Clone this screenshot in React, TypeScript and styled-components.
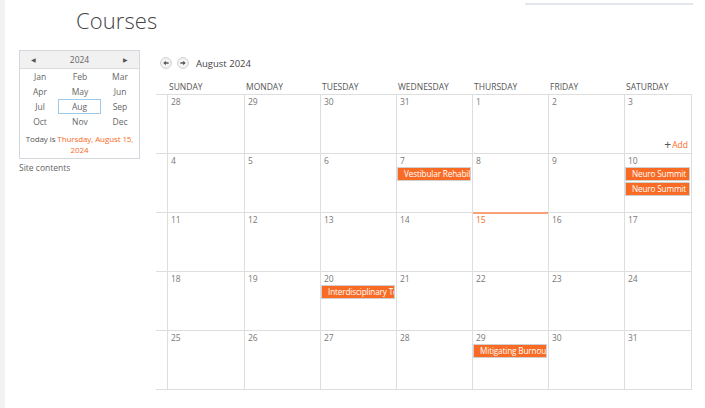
import React from "react";
import styled, { createGlobalStyle } from "styled-components";

const ORANGE = "#f96b24";

const GlobalStyle = createGlobalStyle`
  html, body {
    margin: 0;
    padding: 0;
    background: #ffffff;
  }
  body {
    font-family: "Open Sans", "Noto Sans", sans-serif;
    color: #444444;
  }
`;

interface CalEvent {
  title: string;
}

interface DayInfo {
  day: number;
  events?: CalEvent[];
  today?: boolean;
  add?: boolean;
}

const weekDays = ["SUNDAY", "MONDAY", "TUESDAY", "WEDNESDAY", "THURSDAY", "FRIDAY", "SATURDAY"];

const weeks: DayInfo[][] = [
  [{ day: 28 }, { day: 29 }, { day: 30 }, { day: 31 }, { day: 1 }, { day: 2 }, { day: 3, add: true }],
  [
    { day: 4 },
    { day: 5 },
    { day: 6 },
    { day: 7, events: [{ title: "Vestibular Rehabilitation" }] },
    { day: 8 },
    { day: 9 },
    { day: 10, events: [{ title: "Neuro Summit" }, { title: "Neuro Summit" }] },
  ],
  [{ day: 11 }, { day: 12 }, { day: 13 }, { day: 14 }, { day: 15, today: true }, { day: 16 }, { day: 17 }],
  [
    { day: 18 },
    { day: 19 },
    { day: 20, events: [{ title: "Interdisciplinary Team" }] },
    { day: 21 },
    { day: 22 },
    { day: 23 },
    { day: 24 },
  ],
  [
    { day: 25 },
    { day: 26 },
    { day: 27 },
    { day: 28 },
    { day: 29, events: [{ title: "Mitigating Burnout" }] },
    { day: 30 },
    { day: 31 },
  ],
];

const months = ["Jan", "Feb", "Mar", "Apr", "May", "Jun", "Jul", "Aug", "Sep", "Oct", "Nov", "Dec"];

const NavCircle: React.FC<{ dir: "left" | "right" }> = ({ dir }) => (
  <svg width="12" height="12" viewBox="0 0 12 12">
    <circle cx="6" cy="6" r="5.4" fill="#f4f4f4" stroke="#c8c8c8" strokeWidth="0.9" />
    {dir === "left" ? (
      <path d="M3.3 6 L5.8 3.7 L5.8 5.2 L8.6 5.2 L8.6 6.8 L5.8 6.8 L5.8 8.3 Z" fill="#555" />
    ) : (
      <path d="M8.7 6 L6.2 3.7 L6.2 5.2 L3.4 5.2 L3.4 6.8 L6.2 6.8 L6.2 8.3 Z" fill="#555" />
    )}
  </svg>
);

export default function App() {
  return (
    <>
      <GlobalStyle />
      <Page>
        <Rail />
        <Main>
          <TopBar>
            <SearchBox />
          </TopBar>
          <Title>Courses</Title>
          <Body>
            <Sidebar>
              <Picker>
                <PickerHead>
                  <PickerArrow>&#9664;</PickerArrow>
                  <span>2024</span>
                  <PickerArrow>&#9654;</PickerArrow>
                </PickerHead>
                <MonthGrid>
                  {months.map((m) => (
                    <Month key={m} selected={m === "Aug"}>
                      {m}
                    </Month>
                  ))}
                </MonthGrid>
                <TodayNote>
                  Today is <TodayDate>Thursday, August 15, 2024</TodayDate>
                </TodayNote>
              </Picker>
              <SiteLink>Site contents</SiteLink>
            </Sidebar>
            <Calendar>
              <NavRow>
                <NavCircle dir="left" />
                <NavCircle dir="right" />
                <MonthTitle>August 2024</MonthTitle>
              </NavRow>
              <HeaderRow>
                <span />
                {weekDays.map((d) => (
                  <DayName key={d}>{d}</DayName>
                ))}
              </HeaderRow>
              {weeks.map((week, wi) => (
                <WeekRow key={wi}>
                  <span />
                  {week.map((d, di) => (
                    <DayCell key={di} today={d.today} last={di === 6}>
                      <DayNum today={d.today}>{d.day}</DayNum>
                      {d.events?.map((e, ei) => (
                        <EventBar key={ei}>{e.title}</EventBar>
                      ))}
                      {d.add && (
                        <AddLink>
                          <Plus>+</Plus>Add
                        </AddLink>
                      )}
                    </DayCell>
                  ))}
                </WeekRow>
              ))}
            </Calendar>
          </Body>
        </Main>
      </Page>
    </>
  );
}

const Page = styled.div`
  display: flex;
  width: 705px;
  height: 408px;
  overflow: hidden;
`;

const Rail = styled.div`
  width: 5px;
  flex-shrink: 0;
  background: #f2f2f2;
`;

const Main = styled.div`
  flex: 1;
  display: flex;
  flex-direction: column;
  padding-left: 14px;
`;

const TopBar = styled.div`
  display: flex;
  justify-content: flex-end;
  padding-top: 3px;
  padding-right: 12px;
  height: 2px;
`;

const SearchBox = styled.div`
  width: 168px;
  height: 0;
  border-bottom: 2px solid #e3e6ea;
`;

const Title = styled.h1`
  margin: 0 0 0 57px;
  font-size: 22px;
  font-weight: 300;
  line-height: 30px;
  height: 45px;
  color: #444;
  letter-spacing: 0.1px;
`;

const Body = styled.div`
  display: flex;
  gap: 16px;
`;

const Sidebar = styled.div`
  width: 121px;
  display: flex;
  flex-direction: column;
`;

const Picker = styled.div`
  border: 1px solid #d4d8dc;
  display: flex;
  flex-direction: column;
  padding-bottom: 3px;
`;

const PickerHead = styled.div`
  display: flex;
  justify-content: space-between;
  align-items: center;
  height: 17px;
  padding: 0 11px 0 11px;
  background: #f1f1f1;
  border-bottom: 1px solid #dcdcdc;
  font-size: 8.5px;
  color: #666;
`;

const PickerArrow = styled.span`
  font-size: 6px;
  color: #555;
`;

const MonthGrid = styled.div`
  display: grid;
  grid-template-columns: repeat(3, 40px);
  grid-auto-rows: 15px;
`;

const Month = styled.div<{ selected?: boolean }>`
  display: flex;
  align-items: center;
  justify-content: center;
  font-size: 8.5px;
  color: #666;
  box-sizing: border-box;
  border: 1px solid ${({ selected }) => (selected ? "#9fcbeb" : "transparent")};
  margin: ${({ selected }) => (selected ? "0 -1px 0 -2px" : "0")};
`;

const TodayNote = styled.div`
  margin-top: 4px;
  padding: 0 1px;
  text-align: center;
  font-size: 8px;
  letter-spacing: -0.1px;
  line-height: 11px;
  color: #555;
`;

const TodayDate = styled.span`
  color: ${ORANGE};
`;

const SiteLink = styled.div`
  margin-top: 3px;
  font-size: 8.5px;
  color: #666;
`;

const Calendar = styled.div`
  width: 536px;
  display: flex;
  flex-direction: column;
`;

const NavRow = styled.div`
  display: flex;
  align-items: center;
  gap: 5px;
  height: 14px;
  margin-top: 6px;
  padding-left: 4px;
`;

const MonthTitle = styled.span`
  margin-left: 2px;
  font-size: 9.5px;
  color: #444;
`;

const cols = "11px 77px 76px 76px 76px 76px 76px 68px";

const HeaderRow = styled.div`
  display: grid;
  grid-template-columns: ${cols};
  height: 24px;
  align-items: end;
`;

const DayName = styled.div`
  font-size: 8.5px;
  line-height: 12px;
  padding-left: 2px;
  padding-bottom: 1px;
  color: #555;
`;

const WeekRow = styled.div`
  display: grid;
  grid-template-columns: ${cols};
  box-sizing: border-box;
  height: 59px;
  border-top: 1px solid #dedede;
  &:last-child {
    height: 60px;
    border-bottom: 1px solid #dedede;
  }
`;

const DayCell = styled.div<{ today?: boolean; last?: boolean }>`
  display: flex;
  flex-direction: column;
  min-width: 0;
  border-left: 1px solid #dedede;
  border-right: ${({ last }) => (last ? "1px solid #dedede" : "none")};
  box-shadow: ${({ today }) => (today ? `inset 0 2px 0 #f9a27a` : "none")};
  margin-top: ${({ today }) => (today ? "-1px" : "0")};
  padding-top: ${({ today }) => (today ? "1px" : "0")};
`;

const DayNum = styled.div<{ today?: boolean }>`
  font-size: 8.5px;
  line-height: 12px;
  padding: 1px 0 0 3px;
  color: ${({ today }) => (today ? ORANGE : "#777")};
`;

const EventBar = styled.div`
  margin: 0 1px 1px 0;
  height: 14px;
  box-sizing: border-box;
  border: 1px solid #d0d0d0;
  background: ${ORANGE};
  color: #fff;
  font-size: 8.2px;
  letter-spacing: -0.15px;
  line-height: 12px;
  padding-left: 6px;
  white-space: nowrap;
  overflow: hidden;
`;

const AddLink = styled.div`
  margin-top: auto;
  align-self: flex-end;
  padding: 0 3px 3px 0;
  font-size: 8.5px;
  color: ${ORANGE};
  display: flex;
  align-items: center;
`;

const Plus = styled.span`
  font-size: 12px;
  line-height: 10px;
  color: #555;
  margin-right: 1px;
`;
